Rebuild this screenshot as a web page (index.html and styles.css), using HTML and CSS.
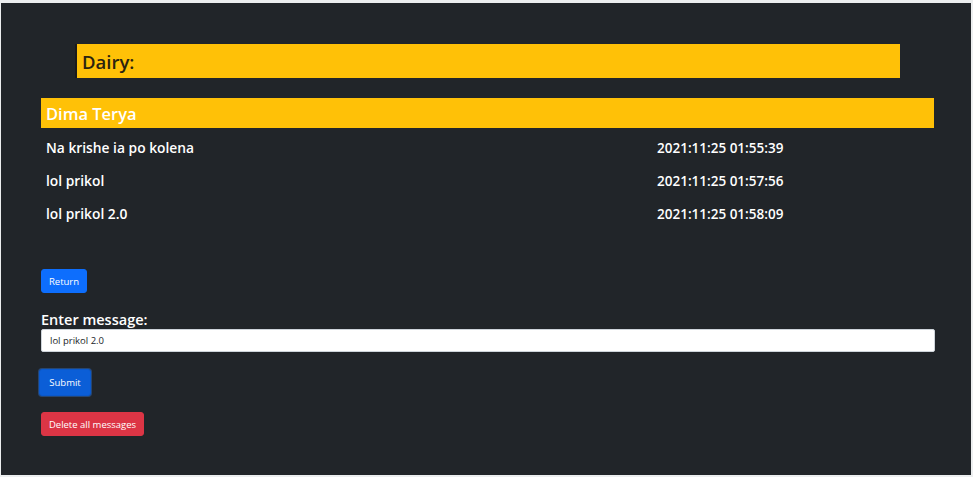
FILE: index.html
```html
<!DOCTYPE html>
<html>
<head>
<meta charset="utf-8">
<link rel="stylesheet" href="styles.css">
</head>
<body>
<div class="page">
  <div class="title-wrap">
    <h2 class="title">Dairy:</h2>
  </div>
  <div class="chat">
    <div class="chat-head">Dima Terya</div>
    <div class="rows">
      <div class="row"><span class="msg">Na krishe ia po kolena</span><span class="time">2021:11:25 01:55:39</span></div>
      <div class="row"><span class="msg">lol prikol</span><span class="time">2021:11:25 01:57:56</span></div>
      <div class="row"><span class="msg">lol prikol 2.0</span><span class="time">2021:11:25 01:58:09</span></div>
    </div>
  </div>
  <div class="controls">
    <button class="btn btn-blue btn-return">Return</button>
    <label class="label">Enter message:</label>
    <input class="input" type="text" value="lol prikol 2.0">
    <button class="btn btn-submit">Submit</button>
    <button class="btn btn-red">Delete all messages</button>
  </div>
</div>
</body>
</html>
```

FILE: styles.css
```css
html, body {
  margin: 0;
  padding: 0;
  background: #eceeef;
  height: 100%;
}
body {
  font-family: "Open Sans", "Noto Sans", sans-serif;
  padding: 3px 2px 2px 1px;
  box-sizing: border-box;
}
.page {
  background: #212529;
  height: 100%;
  box-sizing: border-box;
  padding: 41px 37px 0 40px;
}
.title-wrap {
  padding: 0 34px 0 34px;
}
.title {
  margin: 0;
  background: #ffc107;
  border-left: 2px solid #1a1a1a;
  height: 34px;
  box-sizing: border-box;
  padding-left: 5px;
  font-size: 18.5px;
  font-weight: 600;
  line-height: 36px;
  color: #2b2410;
}
.chat {
  margin-top: 20px;
}
.chat-head {
  background: #ffc107;
  color: #fff;
  height: 30px;
  line-height: 31px;
  font-size: 16.5px;
  font-weight: 600;
  padding-left: 5px;
}
.rows {
  padding-top: 3px;
}
.row {
  display: flex;
  height: 33px;
  align-items: center;
  color: #fff;
  font-size: 13.8px;
  font-weight: 600;
  padding-left: 5px;
}
.msg {
  width: 611px;
}
.time {
  font-size: 13.5px;
}
.controls {
  display: flex;
  flex-direction: column;
  align-items: flex-start;
  margin-top: 39px;
}
.btn {
  font-family: inherit;
  font-size: 9.5px;
  color: #fff;
  border: 1px solid transparent;
  border-radius: 3px;
  padding: 0 8px;
  height: 24px;
  cursor: pointer;
}
.btn-blue {
  background: #0d6efd;
  border-color: #0d6efd;
}
.btn-return {
  width: 46px;
  padding: 0;
}
.label {
  color: #fff;
  font-size: 14.5px;
  font-weight: 600;
  margin-top: 18px;
  line-height: 17px;
}
.input {
  width: 894px;
  height: 23px;
  box-sizing: border-box;
  border: 1px solid #ced4da;
  border-radius: 2px;
  font-family: inherit;
  font-size: 9.5px;
  padding: 0 8px;
  color: #212529;
  background: #fff;
  margin: 1px 0 0 0;
}
.btn-submit {
  background: #0b5ed7;
  border-color: #0a58ca;
  margin-top: 17px;
  margin-left: -2px;
  height: 27px;
  width: 52px;
  padding: 0;
  box-shadow: 0 0 0 1px rgba(49, 132, 253, 0.35);
}
.btn-red {
  background: #dc3545;
  border-color: #dc3545;
  margin-top: 16px;
  width: 103px;
  padding: 0;
}
```
